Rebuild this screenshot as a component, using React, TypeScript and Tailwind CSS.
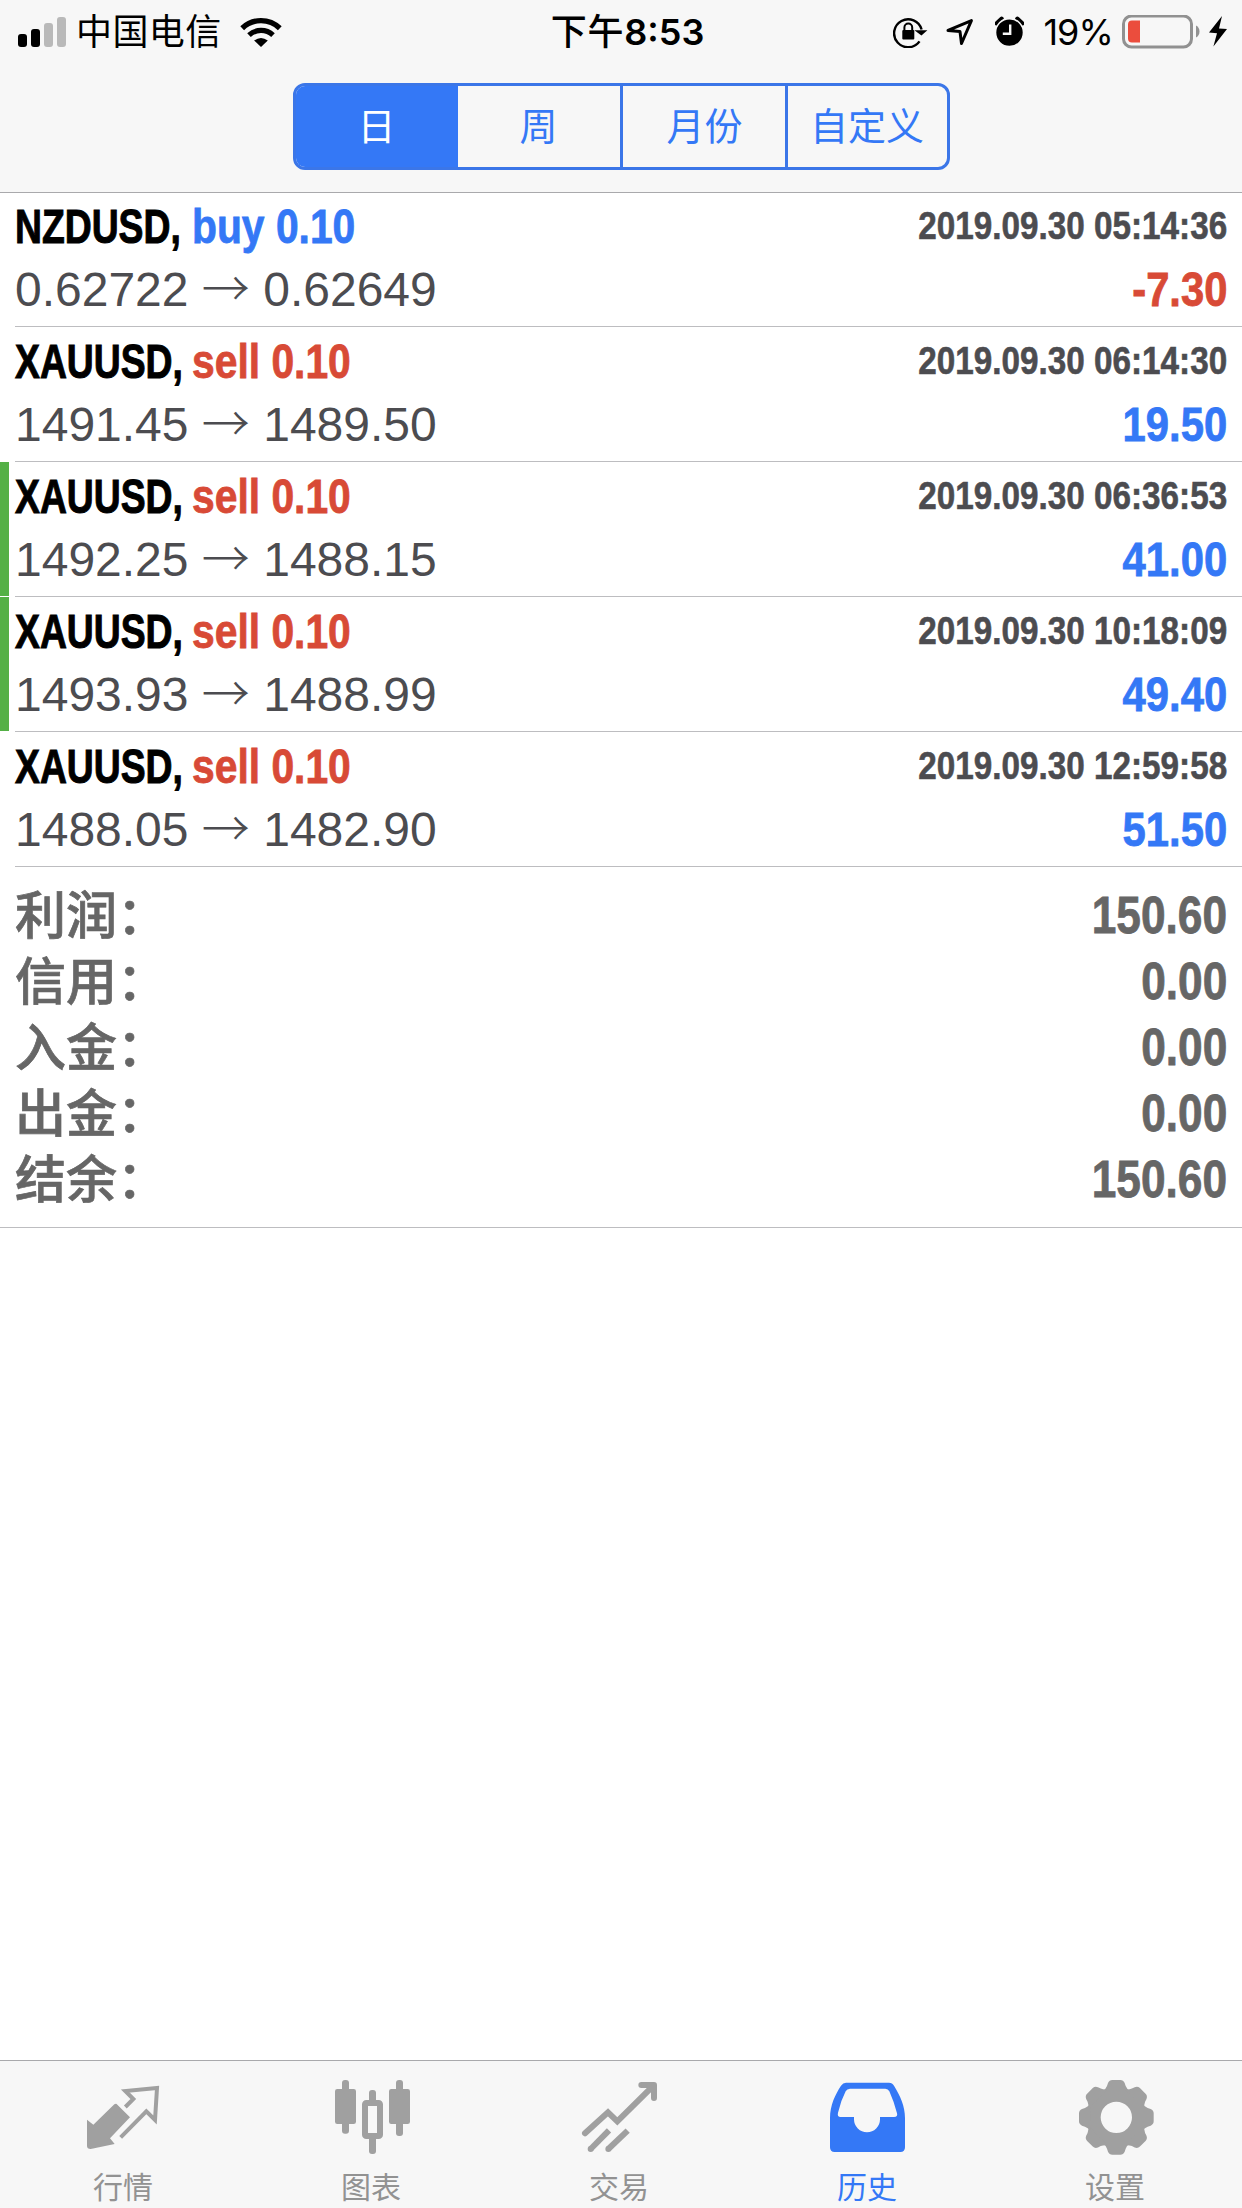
import React from 'react';

interface Deal {
  symbol: string;
  side: 'buy' | 'sell';
  volume: string;
  open: string;
  close: string;
  time: string;
  profit: string;
  marked?: boolean;
}

const deals: Deal[] = [
  { symbol: 'NZDUSD', side: 'buy', volume: '0.10', open: '0.62722', close: '0.62649', time: '2019.09.30 05:14:36', profit: '-7.30' },
  { symbol: 'XAUUSD', side: 'sell', volume: '0.10', open: '1491.45', close: '1489.50', time: '2019.09.30 06:14:30', profit: '19.50' },
  { symbol: 'XAUUSD', side: 'sell', volume: '0.10', open: '1492.25', close: '1488.15', time: '2019.09.30 06:36:53', profit: '41.00', marked: true },
  { symbol: 'XAUUSD', side: 'sell', volume: '0.10', open: '1493.93', close: '1488.99', time: '2019.09.30 10:18:09', profit: '49.40', marked: true },
  { symbol: 'XAUUSD', side: 'sell', volume: '0.10', open: '1488.05', close: '1482.90', time: '2019.09.30 12:59:58', profit: '51.50' },
];

const totals = [
  { label: '利润：', value: '150.60' },
  { label: '信用：', value: '0.00' },
  { label: '入金：', value: '0.00' },
  { label: '出金：', value: '0.00' },
  { label: '结余：', value: '150.60' },
];

const periods = [
  { label: '日', style: 'w-[162px] bg-[#3478f6] text-white' },
  { label: '周', style: 'w-[165px] border-r-3 text-[#3478f6]' },
  { label: '月份', style: 'w-[165px] border-r-3 pl-[2px] text-[#3478f6]' },
  { label: '自定义', style: 'flex-1 text-[#3478f6]' },
];

const StatusBar: React.FC = () => (
  <div className="grid h-[63px] grid-cols-3 items-center pr-[15px] pl-[18px] font-['Inter','Noto_Sans_CJK_SC',sans-serif] text-[36px] leading-none text-black">
    <div className="flex items-center">
      <svg className="mr-[10px] h-[30px] w-[48px]" viewBox="0 0 48 30">
        <rect x="0" y="17" width="9" height="13" rx="3" />
        <rect x="13" y="12" width="9" height="18" rx="3" />
        <rect x="26" y="6" width="9" height="24" rx="3" fill="#b9b9b9" />
        <rect x="39" y="0" width="9" height="30" rx="3" fill="#b9b9b9" />
      </svg>
      <span className="tracking-[0.4px]">中国电信</span>
      <svg className="ml-[18px] h-[30px] w-[42px]" viewBox="0 0 42 30">
        <path d="M2.2 11.2 A27 27 0 0 1 39.8 11.2" fill="none" stroke="#000" strokeWidth="5.4" />
        <path d="M9 18.2 A17.5 17.5 0 0 1 33 18.2" fill="none" stroke="#000" strokeWidth="5.2" />
        <path d="M14.2 23.4 Q21 18.4 27.8 23.4 L21 30 Z" />
      </svg>
    </div>
    <div className="pl-[10px] text-center font-semibold">
      <span className="font-medium tracking-[0.8px]">下午</span>8:53
    </div>
    <div className="flex items-center justify-end">
      <svg className="mr-[18px] h-[32px] w-[35px]" viewBox="0 0 35 32">
        <path d="M26.5 25.4 A14 14 0 1 1 28.6 13.5" fill="none" stroke="#000" strokeWidth="2.4" />
        <path d="M21.4 14.2 L34.4 14.2 L28.4 19.5 Z" />
        <rect x="9.3" y="14" width="12" height="9.6" rx="1" />
        <path d="M11.4 15 V11.5 A3.9 3.9 0 0 1 19.2 11.5 V15" fill="none" stroke="#000" strokeWidth="2" />
      </svg>
      <svg className="mr-[21px] h-[30px] w-[28px]" viewBox="0 0 28 30">
        <path d="M2 13.4 L25.4 3.6 L15.5 26.5 L14 14.6 Z" fill="none" stroke="#000" strokeWidth="3" strokeLinejoin="round" />
      </svg>
      <svg className="mr-[19px] h-[32px] w-[29px]" viewBox="0 0 29 32">
        <path d="M1.8 7.4 L6.6 2.8" stroke="#000" strokeWidth="4.4" strokeLinecap="round" />
        <path d="M27.2 7.4 L22.4 2.8" stroke="#000" strokeWidth="4.4" strokeLinecap="round" />
        <circle cx="14.5" cy="16.6" r="14" fill="#000" stroke="#f7f7f7" strokeWidth="1.6" />
        <path d="M15.2 8.4 V17.8 H7.8" fill="none" stroke="#f7f7f7" strokeWidth="2.4" />
      </svg>
      <span className="mr-[9px] tracking-[-0.9px]">19%</span>
      <svg className="mr-[8px] h-[34px] w-[79px]" viewBox="0 0 79 34">
        <rect x="1.5" y="1" width="68" height="31" rx="8" fill="none" stroke="#919191" strokeWidth="3" />
        <path d="M10 5.5 H18 V27.5 H10 A4 4 0 0 1 6 23.5 V9.5 A4 4 0 0 1 10 5.5 Z" fill="#eb4d3d" />
        <path d="M74 10.5 A6 6.6 0 0 1 74 22.5 Z" fill="#919191" />
      </svg>
      <svg className="h-[31px] w-[18px]" viewBox="0 0 18 31">
        <path d="M13 0 L0 16.5 L8 17.2 L4.4 30.6 L18 13 L10 12.4 Z" />
      </svg>
    </div>
  </div>
);

const PeriodPicker: React.FC = () => (
  <div className="mx-auto mt-5 flex h-[87px] w-[657px] overflow-hidden rounded-[12px] border-3 border-[#3b76e8]">
    {periods.map((period) => (
      <div
        key={period.label}
        className={`flex items-center justify-center border-[#3b76e8] text-[38px] leading-none ${period.style}`}
      >
        {period.label}
      </div>
    ))}
  </div>
);

const DealRow: React.FC<{ deal: Deal }> = ({ deal }) => (
  <div className="flex h-[135px] first:h-[134px]">
    <div className={`mr-[6px] w-[9px] ${deal.marked ? 'mb-px bg-[#54b046]' : ''}`} />
    <div className="flex flex-1 flex-col justify-end border-b border-[#bdbdc0] pr-[15px] pb-[5px]">
      <div className="flex h-[63px] items-center justify-between font-bold">
        <div className="flex text-[48px]">
          <div className="w-[177px]">
            <div className="w-max origin-left scale-x-[0.777] text-black [-webkit-text-stroke:1px]">{deal.symbol},</div>
          </div>
          <div
            className={`origin-left scale-x-[0.85] [-webkit-text-stroke:0.8px] ${
              deal.side === 'buy' ? 'text-[#3478f6]' : 'text-[#d84a36]'
            }`}
          >
            {deal.side} {deal.volume}
          </div>
        </div>
        <div className="origin-right scale-x-[0.853] text-[39px] text-[#4c4c50] [-webkit-text-stroke:0.6px]">{deal.time}</div>
      </div>
      <div className="flex h-[63px] items-center justify-between text-[48px]">
        <div className="text-[#4c4c50]">
          {deal.open} <span className="font-['Noto_Sans_CJK_SC'] leading-none font-light">→</span> {deal.close}
        </div>
        <div
          className={`origin-right scale-x-[0.87] font-bold [-webkit-text-stroke:0.8px] ${
            deal.profit.startsWith('-') ? 'text-[#d84a36]' : 'text-[#3478f6]'
          }`}
        >
          {deal.profit}
        </div>
      </div>
    </div>
  </div>
);

/* Tab icons */
const QuotesIcon = () => (
  <svg className="h-20 w-21" viewBox="246 81 252 240" fill="#a0a0a0">
    <path d="M349 161 L390 202 L330 265 L344 282 L272 297 Q261 297 261 288 V209 L280 224 L343 163 Q348 159 353 164 Z" />
    <path d="M376 171 L400 147 L376 123 L471 114 L465 210 L439 184 L362 262" fill="none" stroke="#a0a0a0" strokeWidth="12" />
  </svg>
);

const ChartIcon = () => (
  <svg className="h-20 w-21" viewBox="990 81 252 240" fill="#a0a0a0">
    <rect x="1005" y="117" width="63" height="105" rx="7" />
    <rect x="1026" y="90" width="21" height="161" rx="9" />
    <rect x="1167" y="117" width="63" height="105" rx="7" />
    <rect x="1188" y="90" width="21" height="168" rx="9" />
    <rect x="1107" y="120" width="21" height="40" rx="9" />
    <rect x="1107" y="255" width="21" height="57" rx="9" />
    <rect x="1095" y="159" width="45" height="99" rx="4" fill="none" stroke="#a0a0a0" strokeWidth="18" />
  </svg>
);

const TradeIcon = () => (
  <svg className="h-20 w-21" viewBox="474 81 252 240" fill="none" stroke="#a0a0a0" strokeWidth="18">
    <path d="M495 250 L564 187 L592 214 L698 109" strokeLinecap="round" />
    <path d="M664 105 H702 V144" strokeLinecap="round" strokeLinejoin="round" />
    <path d="M676 110 H698 V132 Z" fill="#a0a0a0" stroke="none" />
    <path d="M512 297 L567 241" />
    <path d="M565 297 L623 242" />
    <path d="M512 297 h.1 M565 297 h.1" strokeLinecap="round" />
  </svg>
);

const HistoryIcon = () => (
  <svg className="h-20 w-21" viewBox="18 81 252 240" fill="#3478f6">
    <path
      fillRule="evenodd"
      d="M78 98 H207 Q217 98 222 107 C240 138 255 165 255 205 V292 Q255 306 241 306 H44 Q30 306 30 292 V205 C30 165 46 133 63 107 Q69 98 78 98 Z M90 116 Q81 116 77 124 Q62 153 54 188 Q51 201 62 201 H102 V208 A39 39 0 0 0 180 208 V201 H222 Q234 201 231 190 Q222 155 208 124 Q204 116 196 116 Z"
    />
  </svg>
);

const SettingsIcon = () => (
  <svg className="h-20 w-21" viewBox="-127 -121 252 240" fill="#a0a0a0">
    <circle r="67" fill="none" stroke="#a0a0a0" strokeWidth="40" />
    {[0, 45, 90, 135, 180, 225, 270, 315].map((angle) => (
      <path
        key={angle}
        transform={`rotate(${angle})`}
        d="M-42 -77 Q-32 -84 -28 -94 L-25 -103 Q-21 -112 -12 -112 H12 Q21 -112 25 -103 L28 -94 Q32 -84 42 -77 Z"
      />
    ))}
  </svg>
);

const tabs = [
  { label: '行情', icon: <QuotesIcon /> },
  { label: '图表', icon: <ChartIcon /> },
  { label: '交易', icon: <TradeIcon /> },
  { label: '历史', icon: <HistoryIcon />, active: true },
  { label: '设置', icon: <SettingsIcon /> },
];

const App: React.FC = () => {
  return (
    <div className="flex h-[2208px] w-[1242px] flex-col overflow-hidden bg-white font-['Liberation_Sans','Noto_Sans_CJK_SC',sans-serif]">
      {/* Header */}
      <header className="h-[193px] border-b border-[#a9a9ac] bg-[#f7f7f7]">
        <StatusBar />
        <PeriodPicker />
      </header>

      {/* Closed deals */}
      <div>
        {deals.map((deal) => (
          <DealRow key={deal.time} deal={deal} />
        ))}
      </div>

      {/* Totals */}
      <div className="border-b border-[#bdbdc0] px-[15px] py-[15px] text-[51px] font-bold text-[#666666]">
        {totals.map((total) => (
          <div key={total.label} className="flex h-[66px] items-center justify-between">
            <span className="pb-[6px] font-['Noto_Sans_CJK_SC',sans-serif] leading-[60px] font-medium [-webkit-text-stroke:0.7px]">
              {total.label}
            </span>
            <span className="origin-right scale-x-[0.867] pt-[2px] [-webkit-text-stroke:0.8px]">{total.value}</span>
          </div>
        ))}
      </div>

      {/* Tab bar */}
      <nav className="mt-auto grid h-[148px] grid-cols-5 border-t border-[#a9a9ac] bg-[#f7f7f7] pt-4 pr-[2px]">
        {tabs.map((tab) => (
          <div key={tab.label} className={`flex flex-col items-center ${tab.active ? 'text-[#3478f6]' : 'text-[#929292]'}`}>
            {tab.icon}
            <span className="mt-[11px] pr-[2px] text-[30px] leading-10">{tab.label}</span>
          </div>
        ))}
      </nav>
    </div>
  );
};

export default App;
